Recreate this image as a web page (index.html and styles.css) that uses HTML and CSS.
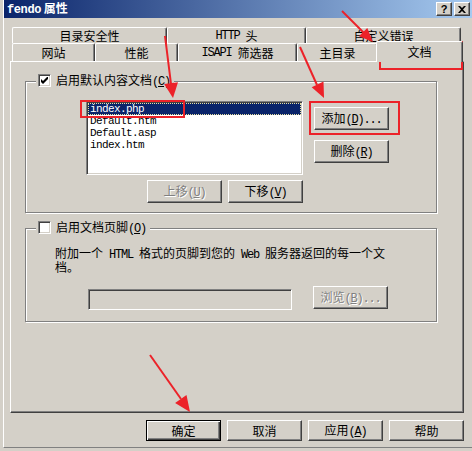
FILE: index.html
```html
<!DOCTYPE html>
<html lang="zh-CN">
<head>
    <meta charset="UTF-8">
    <title>fendo 属性</title>
    <link rel="stylesheet" href="styles.css">
</head>
<body>

    <div class="window">
        <div class="titlebar">
            <span class="title"><span class="title-en">fendo</span> 属性</span>
            <div class="caption-btns">
                <span class="cbtn">?</span>
                <span class="cbtn">
                    <svg width="8" height="7" viewBox="0 0 8 7"><path d="M0 0h2l2 2 2-2h2L5 3.5 8 7H6L4 5 2 7H0l3-3.5z" fill="#000"/></svg>
                </span>
            </div>
        </div>

        <div class="tabs">
            <div class="tabrow back">
                <div class="tab w155">目录安全性</div>
                <div class="tab w139"><span class="en">HTTP&nbsp;</span>头</div>
                <div class="tab w155">自定义错误</div>
            </div>
            <div class="tabrow front">
                <div class="tab w83">网站</div>
                <div class="tab w83">性能</div>
                <div class="tab w119"><span class="en">ISAPI&nbsp;</span>筛选器</div>
                <div class="tab w81">主目录</div>
                <div class="tab sel">文档</div>
            </div>
        </div>

        <div class="panel">
            <div class="group g1">
                <div class="legend">
                    <span class="check">
                        <svg width="7" height="7" viewBox="0 0 7 7"><path d="M0 2v3l2 2 5-5V-1L2 4z" fill="#000"/></svg>
                    </span>
                    <span>启用默认内容文档<span class="en">(<u>C</u>)</span></span>
                </div>
                <div class="doclist">
                    <ul class="listbox">
                        <li class="sel">index.php</li>
                        <li>Default.htm</li>
                        <li>Default.asp</li>
                        <li>index.htm</li>
                    </ul>
                    <div class="side">
                        <button class="btn">添加<span class="en">(<u>D</u>)...</span></button>
                        <button class="btn">删除<span class="en">(<u>R</u>)</span></button>
                    </div>
                    <div class="move">
                        <button class="btn" disabled>上移<span class="en">(<u>U</u>)</span></button>
                        <button class="btn">下移<span class="en">(<u>V</u>)</span></button>
                    </div>
                </div>
            </div>

            <div class="group g2">
                <div class="legend">
                    <span class="check"></span>
                    <span>启用文档页脚<span class="en">(<u>O</u>)</span></span>
                </div>
                <p class="desc">附加一个<span class="en">&nbsp;HTML&nbsp;</span>格式的页脚到您的<span class="en">&nbsp;Web&nbsp;</span>服务器返回的每一个文<br>档。</p>
                <div class="footer-row">
                    <div class="field"></div>
                    <button class="btn" disabled>浏览<span class="en">(<u>B</u>)...</span></button>
                </div>
            </div>
        </div>

        <div class="actions">
            <button class="btn short def">确定</button>
            <button class="btn short">取消</button>
            <button class="btn short">应用<span class="en">(<u>A</u>)</span></button>
            <button class="btn short">帮助</button>
        </div>
    </div>

    <!-- red markup drawn on top of the screenshot -->
    <svg class="marks" width="472" height="451" viewBox="0 0 472 451">
        <g fill="none" stroke="#ec2229" stroke-width="2">
            <rect x="81" y="101" width="103" height="16"/>
            <rect x="310" y="102" width="89" height="32"/>
            <rect x="380" y="42" width="82" height="27"/>
            <line x1="342" y1="11" x2="364" y2="33"/>
            <line x1="165" y1="36" x2="171" y2="84"/>
            <line x1="300" y1="47" x2="317" y2="85"/>
            <line x1="150" y1="355" x2="181" y2="399"/>
        </g>
        <g fill="#ec2229">
            <polygon points="373,42 358.9,36.3 367.3,27.9"/>
            <polygon points="173,98 164.1,84 178,82.2"/>
            <polygon points="324,98 311.7,87.2 323.5,81.6"/>
            <polygon points="190,412 175.1,402.9 186.5,394.9"/>
        </g>
    </svg>

</body>
</html>
```

FILE: styles.css
```css
body {
    margin: 0;
    width: 472px;
    height: 451px;
    position: relative;
    overflow: hidden;
    background-color: #d4d0c8;
    font: 12px/12px "Noto Sans CJK SC", sans-serif;
    color: #000;
}

.en {
    font-family: "Liberation Mono", monospace;
    font-size: 12px;
    letter-spacing: -1.2px;
    line-height: 10px;
}

.window {
    margin-left: 3px;
    width: 469px;
    height: 447px;
    border-left: 1px solid #fff;
    border-bottom: 1px solid #808080;
}

.titlebar {
    height: 18px;
    display: flex;
    align-items: center;
    justify-content: space-between;
    padding-left: 3px;
    background: linear-gradient(to right, #0a246a, #a6caf0);
    color: #fff;
}

.title {
    font-weight: bold;
}

.title-en {
    font-family: "Liberation Mono", monospace;
    font-size: 12px;
    letter-spacing: -0.4px;
}

.caption-btns {
    display: flex;
    gap: 2px;
    margin-right: 3px;
}

.cbtn {
    width: 16px;
    height: 14px;
    box-sizing: border-box;
    display: flex;
    align-items: center;
    justify-content: center;
    border: 1px solid;
    border-color: #fff #404040 #404040 #fff;
    box-shadow: inset -1px -1px #808080;
    background-color: #d4d0c8;
    color: #000;
    font: bold 11px/11px "Liberation Sans", sans-serif;
}

/* tabs */
.tabs {
    padding: 9px 0 0 8px;
}

.tabrow {
    display: flex;
}

.back {
    height: 16px;
}

.front {
    height: 18px;
}

.tab {
    box-sizing: border-box;
    display: flex;
    align-items: center;
    justify-content: center;
    border: 1px solid #fff;
    border-right-color: #404040;
    border-bottom: 0;
    border-radius: 2px 2px 0 0;
    box-shadow: inset -1px 0 #808080;
    background-color: #d4d0c8;
}

.back .tab {
    height: 16px;
}

.front .tab {
    height: 18px;
}

.w155 { width: 155px; }
.w139 { width: 139px; }
.w119 { width: 119px; }
.w83 { width: 83px; }
.w81 { width: 81px; }

.front .tab.sel {
    width: 87px;
    height: 21px;
    margin: -2px -2px -1px -2px;
    position: relative;
    z-index: 1;
}

/* property page */
.panel {
    margin-left: 6px;
    width: 454px;
    height: 352px;
    box-sizing: border-box;
    border: 1px solid;
    border-color: #fff #404040 #404040 #fff;
    box-shadow: inset -1px -1px #808080;
    padding: 19px 0 0 14px;
}

.group {
    width: 412px;
    box-sizing: border-box;
    border: 1px solid #808080;
    box-shadow: 1px 1px 0 #fff, inset 1px 1px 0 #fff;
}

.g1 {
    height: 132px;
}

.g2 {
    height: 94px;
    margin-top: 15px;
}

.legend {
    display: flex;
    align-items: center;
    gap: 5px;
    width: max-content;
    height: 13px;
    margin: -8px 0 0 10px;
    padding: 0 4px 0 2px;
    background-color: #d4d0c8;
}

.check {
    width: 13px;
    height: 13px;
    box-sizing: border-box;
    display: flex;
    align-items: center;
    justify-content: center;
    border: 1px solid;
    border-color: #808080 #fff #fff #808080;
    box-shadow: inset 1px 1px #404040, inset -1px -1px #d4d0c8;
    background-color: #fff;
}

.doclist {
    display: grid;
    grid-template-columns: 217px 75px;
    column-gap: 11px;
    row-gap: 5px;
    margin: 14px 0 0 60px;
}

.listbox {
    height: 74px;
    box-sizing: border-box;
    margin: 0;
    padding: 1px;
    list-style: none;
    border: 1px solid;
    border-color: #808080 #fff #fff #808080;
    box-shadow: inset 1px 1px #404040, inset -1px -1px #d4d0c8;
    background-color: #fff;
}

.listbox li {
    height: 12px;
    padding-left: 2px;
    font: 11px/12px "Liberation Mono", monospace;
    letter-spacing: -0.6px;
}

.listbox li.sel {
    background-color: #0a246a;
    color: #fff;
    outline: 1px dotted #e8e0a0;
    outline-offset: -1px;
}

.side {
    display: flex;
    flex-direction: column;
    gap: 10px;
    padding-top: 6px;
}

.move {
    display: flex;
    justify-content: flex-end;
    gap: 6px;
}

.btn {
    width: 75px;
    height: 23px;
    box-sizing: border-box;
    padding: 0;
    border: 1px solid;
    border-color: #fff #404040 #404040 #fff;
    box-shadow: inset -1px -1px #808080;
    background-color: #d4d0c8;
    font: inherit;
    color: #000;
}

.btn:disabled {
    color: #808080;
    text-shadow: 1px 1px #fff;
}

.btn.short {
    height: 21px;
}

.btn.def {
    border-color: #000;
    box-shadow: inset 1px 1px #fff, inset -1px -1px #404040, inset -2px -2px #808080;
}

.desc {
    margin: 12px 0 0 29px;
    line-height: 13px;
}

.footer-row {
    display: flex;
    align-items: flex-start;
    gap: 21px;
    margin: 13px 0 0 62px;
}

.field {
    width: 204px;
    height: 21px;
    margin-top: 3px;
    box-sizing: border-box;
    border: 1px solid;
    border-color: #808080 #fff #fff #808080;
    box-shadow: inset 1px 1px #404040, inset -1px -1px #d4d0c8;
}

.actions {
    width: 454px;
    display: flex;
    justify-content: flex-end;
    gap: 6px;
    margin: 7px 0 0 6px;
}

.marks {
    position: absolute;
    left: 0;
    top: 0;
    pointer-events: none;
}
```
